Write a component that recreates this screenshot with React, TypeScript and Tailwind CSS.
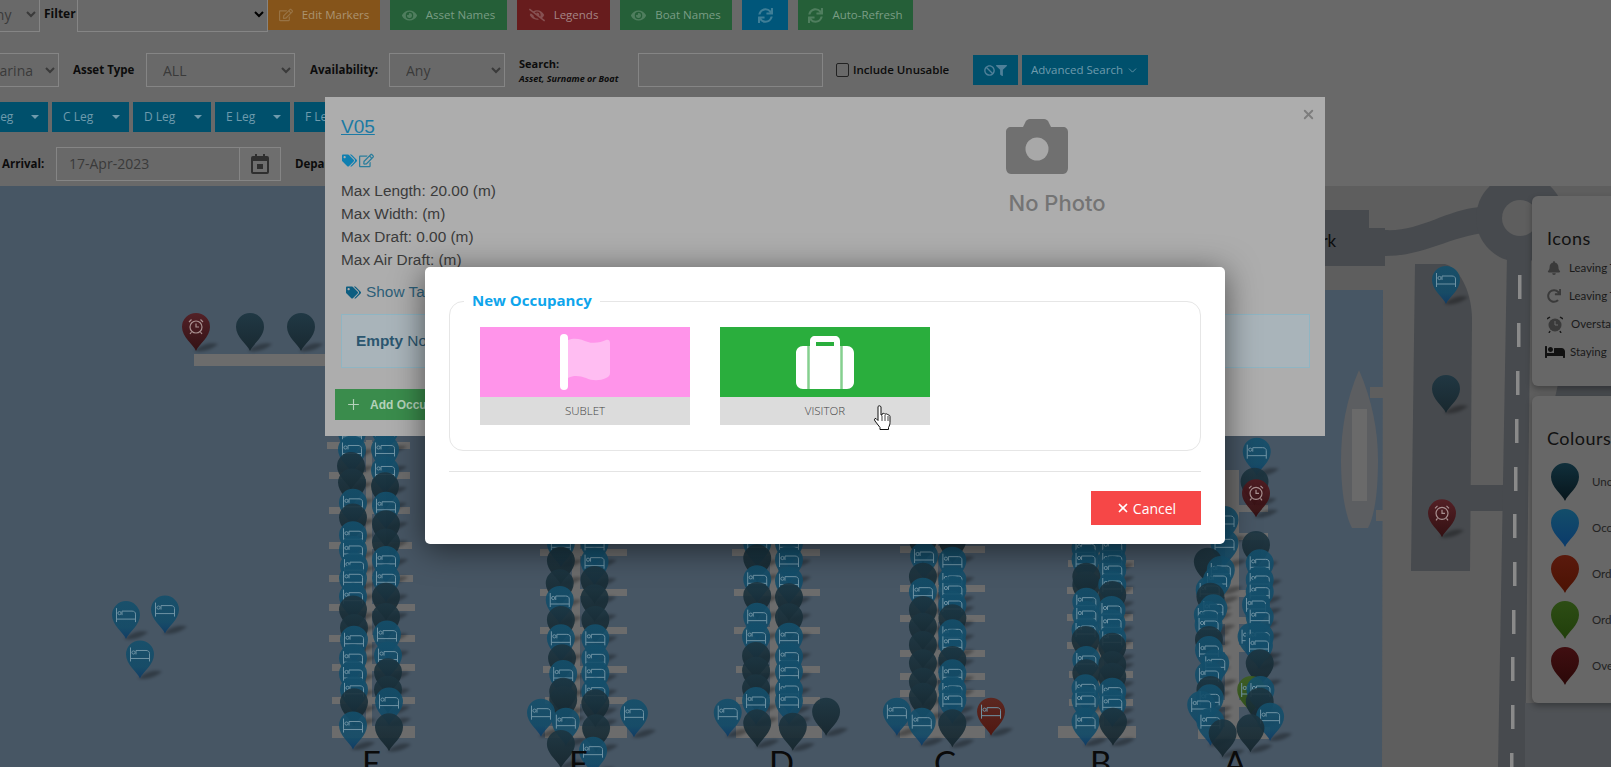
import React from 'react'
import { ChevronDown, Plus, X } from 'lucide-react'
import { FaBan, FaBed, FaBell, FaEye, FaEyeSlash, FaFilter, FaRedo, FaRegEdit, FaSync, FaTags } from 'react-icons/fa'

type Kind = 'b' | 'd' | 'r' | 'a' | 'g'
type Pin = [number, number, Kind]

// head positions were read off zoomed crops, so each group carries its own scale
const group = (ox: number, fx: number, oy: number, fy: number, list: Pin[]): Pin[] =>
  list.map(([x, y, k]) => [ox + x / fx, oy + y / fy + 24, k] as Pin)

const pins: Pin[] = [
  [196, 351, 'a'], [250, 351, 'd'], [301, 351, 'd'],
  ...group(0, 3, 190, 2.717, [
    [378, 1155, 'b'], [495, 1140, 'b'], [420, 1262, 'b'],
    [1056, 660, 'b'], [1056, 705, 'b'], [1053, 750, 'd'], [1056, 795, 'd'], [1059, 850, 'b'], [1059, 890, 'd'],
    [1059, 938, 'b'], [1059, 978, 'b'], [1062, 1022, 'b'], [1059, 1055, 'b'], [1059, 1105, 'b'], [1059, 1140, 'd'],
    [1062, 1190, 'd'], [1062, 1222, 'b'], [1059, 1272, 'b'], [1059, 1315, 'b'], [1062, 1358, 'b'], [1062, 1392, 'd'],
    [1059, 1455, 'b'],
    [1155, 650, 'b'], [1155, 705, 'b'], [1155, 762, 'b'], [1155, 805, 'd'], [1158, 858, 'b'], [1158, 908, 'd'],
    [1158, 958, 'd'], [1158, 1005, 'b'], [1158, 1055, 'b'], [1158, 1105, 'd'], [1158, 1160, 'd'], [1161, 1208, 'b'],
    [1164, 1265, 'b'], [1164, 1310, 'd'], [1164, 1358, 'd'], [1167, 1390, 'b'], [1167, 1460, 'd'],
  ]),
  ...group(430, 2.613, 530, 3, [
    [342, 40, 'b'], [342, 92, 'd'], [339, 160, 'd'], [339, 210, 'b'], [342, 270, 'd'], [342, 325, 'b'], [345, 385, 'd'],
    [348, 432, 'b'], [348, 485, 'd'], [348, 510, 'd'], [290, 548, 'b'], [355, 575, 'b'], [342, 642, 'd'],
    [430, 40, 'b'], [430, 95, 'b'], [430, 150, 'd'], [430, 205, 'd'], [432, 270, 'd'], [432, 325, 'b'], [432, 385, 'b'],
    [432, 430, 'b'], [432, 485, 'b'], [432, 520, 'd'], [533, 550, 'b'], [434, 595, 'd'], [426, 662, 'b'],
    [855, 40, 'b'], [855, 85, 'd'], [855, 148, 'b'], [855, 198, 'd'], [855, 260, 'b'], [852, 320, 'b'], [852, 378, 'd'],
    [852, 422, 'd'], [852, 475, 'd'], [852, 513, 'b'], [778, 548, 'b'], [855, 580, 'd'],
    [938, 40, 'b'], [938, 90, 'b'], [938, 152, 'b'], [938, 202, 'd'], [938, 262, 'd'], [938, 320, 'b'], [938, 380, 'b'],
    [938, 425, 'b'], [938, 480, 'b'], [938, 513, 'b'], [1035, 545, 'd'], [948, 590, 'd'],
    [1288, 30, 'd'], [1291, 78, 'b'], [1288, 140, 'd'], [1288, 185, 'b'], [1288, 240, 'd'], [1288, 290, 'd'],
    [1288, 345, 'd'], [1288, 400, 'd'], [1288, 455, 'd'], [1288, 500, 'd'], [1220, 545, 'b'], [1285, 575, 'b'],
    [1365, 30, 'd'], [1365, 92, 'b'], [1365, 150, 'b'], [1365, 180, 'b'], [1365, 225, 'b'], [1365, 265, 'd'],
    [1365, 310, 'b'], [1365, 340, 'b'], [1365, 390, 'd'], [1365, 430, 'b'], [1365, 480, 'b'], [1365, 510, 'b'],
    [1365, 580, 'd'], [1466, 545, 'r'],
  ]),
  ...group(1030, 2.699, 420, 3, [
    [150, 385, 'b'], [150, 420, 'b'], [152, 470, 'd'], [152, 495, 'd'], [152, 545, 'b'], [152, 585, 'b'], [150, 630, 'b'],
    [150, 660, 'd'], [152, 720, 'b'], [152, 760, 'd'], [150, 805, 'b'], [150, 840, 'b'], [150, 905, 'b'],
    [222, 380, 'b'], [222, 420, 'b'], [222, 450, 'b'], [222, 495, 'b'], [222, 525, 'd'], [220, 570, 'b'], [220, 610, 'b'],
    [222, 655, 'b'], [222, 680, 'd'], [222, 735, 'd'], [222, 770, 'd'], [222, 815, 'b'], [222, 850, 'b'], [224, 905, 'd'],
    [525, 300, 'b'], [525, 370, 'b'], [480, 425, 'd'], [515, 450, 'b'], [505, 480, 'b'], [485, 510, 'b'], [487, 530, 'd'],
    [495, 565, 'b'], [480, 585, 'b'], [482, 615, 'b'], [483, 660, 'd'], [483, 690, 'b'], [500, 730, 'b'], [483, 765, 'b'],
    [487, 810, 'd'], [485, 835, 'b'], [462, 855, 'b'], [487, 905, 'b'], [520, 940, 'd'],
    [612, 95, 'b'], [606, 185, 'd'], [610, 220, 'a'], [610, 375, 'd'], [620, 430, 'b'], [620, 480, 'b'], [620, 515, 'b'],
    [610, 555, 'b'], [620, 590, 'b'], [598, 650, 'b'], [620, 650, 'b'], [618, 675, 'b'], [620, 730, 'd'], [597, 810, 'g'],
    [622, 810, 'b'], [620, 845, 'd'], [648, 890, 'b'], [595, 925, 'd'], [1112, 280, 'a'],
  ]),
  [1446, 304, 'b'], [1446, 413, 'd'],
].sort((a, b) => a[1] - b[1]) as Pin[]

// [x, y, width, height] of the jetties
const bars: number[][] = [
  [194, 354, 140, 12],
  [327, 442, 83, 7], [329, 472, 81, 7], [329, 507, 81, 7], [329, 542, 83, 7], [329, 575, 84, 7], [329, 604, 86, 7],
  [329, 635, 86, 7], [332, 664, 83, 7], [332, 697, 83, 7], [332, 726, 83, 12], [366, 440, 6, 290],
  [540, 549, 87, 7], [540, 589, 87, 7], [540, 627, 87, 7], [543, 666, 84, 7], [545, 697, 82, 7], [545, 726, 82, 12], [572, 540, 8, 190],
  [732, 549, 88, 7], [734, 589, 86, 7], [734, 627, 86, 7], [736, 666, 84, 7], [736, 697, 84, 7], [736, 726, 86, 12], [770, 540, 8, 190],
  [900, 546, 85, 7], [900, 585, 85, 7], [900, 615, 85, 7], [900, 650, 85, 7], [900, 673, 85, 7], [900, 690, 85, 7], [900, 726, 85, 12], [930, 540, 8, 190],
  [1068, 560, 66, 7], [1067, 587, 66, 7], [1067, 614, 66, 7], [1067, 642, 66, 7], [1069, 671, 64, 7], [1069, 699, 64, 7], [1058, 726, 78, 12], [1092, 545, 12, 185],
  [1198, 505, 70, 7], [1198, 533, 70, 7], [1198, 590, 70, 7], [1198, 617, 70, 7], [1198, 645, 70, 7], [1198, 700, 70, 7], [1198, 727, 72, 12], [1225, 470, 14, 265],
]

const dashes = [[1518, 275], [1517, 323], [1516, 371], [1515, 419], [1514, 467], [1513, 514], [1513, 562], [1512, 610], [1511, 657], [1511, 705], [1510, 753]]

const Bed = () => (
  <g fill="none" stroke="#6f92a3" strokeWidth="1">
    <path d="M-9.500 -31V-17M-9.500 -20H9.500M9.500 -25V-17M-4 -24V-28H6C8 -28 9.500 -27 9.500 -25" />
    <circle cx="-6.500" cy="-26" r="1.600" />
  </g>
)

const Alarm = () => (
  <g fill="none" stroke="#a89090" strokeWidth="1.200">
    <circle cx="0" cy="-24" r="6" />
    <path d="M0 -27.500V-24H3M-7 -29L-4.500 -31.500M7 -29L4.500 -31.500M-4.500 -19L-6 -17M4.500 -19L6 -17" />
  </g>
)

const PIN_PATH = 'M0 0C-3 -7 -14 -14 -14 -24A14 14 0 1 1 14 -24C14 -14 3 -7 0 0Z'

const MapPin = ({ x, y, kind }: { x: number; y: number; kind: Kind }) => {
  const fill = { b: 'url(#pinBlue)', d: 'url(#pinDark)', r: 'url(#pinRed)', a: 'url(#pinMaroon)', g: 'url(#pinGreen)' }[kind]
  return (
    <g transform={`translate(${x} ${y})`}>
      <path d="M-2 0C6 -7 14 -9 22 -7C18 -3 8 2 -2 0Z" fill="#000" opacity="0.3" filter="url(#soft)" />
      <path d={PIN_PATH} fill={fill} fillOpacity={0.9} />
      {(kind === 'b' || kind === 'g' || kind === 'r') && <Bed />}
      {kind === 'a' && <Alarm />}
    </g>
  )
}

const MarinaMap = () => (
  <svg className="block h-[581px] w-[1611px]" viewBox="0 186 1611 581">
    <defs>
      <linearGradient id="pinBlue" x1="0" y1="0" x2="0" y2="1">
        <stop offset="0" stopColor="#144f6b" />
        <stop offset="0.7" stopColor="#124b68" />
        <stop offset="1" stopColor="#0c3a66" />
      </linearGradient>
      <linearGradient id="pinDark" x1="0" y1="0" x2="0" y2="1">
        <stop offset="0" stopColor="#1c3541" />
        <stop offset="1" stopColor="#14242b" />
      </linearGradient>
      <linearGradient id="pinRed" x1="0" y1="0" x2="0" y2="1">
        <stop offset="0" stopColor="#5e2219" />
        <stop offset="1" stopColor="#511108" />
      </linearGradient>
      <linearGradient id="pinMaroon" x1="0" y1="0" x2="0" y2="1">
        <stop offset="0" stopColor="#541b20" />
        <stop offset="1" stopColor="#310a0c" />
      </linearGradient>
      <linearGradient id="pinGreen" x1="0" y1="0" x2="0" y2="1">
        <stop offset="0" stopColor="#3d5e1f" />
        <stop offset="1" stopColor="#274a0f" />
      </linearGradient>
      <linearGradient id="legendDark" x1="0" y1="0" x2="0" y2="1">
        <stop offset="0" stopColor="#102f3b" />
        <stop offset="1" stopColor="#07151b" />
      </linearGradient>
      <linearGradient id="legendBlue" x1="0" y1="0" x2="0" y2="1">
        <stop offset="0" stopColor="#134d6a" />
        <stop offset="1" stopColor="#0b3a6a" />
      </linearGradient>
      <linearGradient id="legendRed" x1="0" y1="0" x2="0" y2="1">
        <stop offset="0" stopColor="#5a1a0d" />
        <stop offset="1" stopColor="#4b1203" />
      </linearGradient>
      <linearGradient id="legendGreen" x1="0" y1="0" x2="0" y2="1">
        <stop offset="0" stopColor="#2d4d15" />
        <stop offset="1" stopColor="#213f0b" />
      </linearGradient>
      <linearGradient id="legendMaroon" x1="0" y1="0" x2="0" y2="1">
        <stop offset="0" stopColor="#400f11" />
        <stop offset="1" stopColor="#2b0808" />
      </linearGradient>
      <filter id="soft" x="-30%" y="-60%" width="160%" height="220%">
        <feGaussianBlur stdDeviation="1.500" />
      </filter>
    </defs>

    <rect x="0" y="186" width="1611" height="581" fill="#475664" />
    <path d="M1320 186H1611V767H1382L1383 290H1320Z" fill="#5e5e5e" />

    <path d="M1300 210H1369V228H1385V266H1300Z" fill="#474a4e" />
    <path d="M1385 230C1420 232 1445 210 1480 207L1490 232C1450 236 1425 256 1385 256Z" fill="#474a4e" />
    <circle cx="1520" cy="218" r="44" fill="#474a4e" />
    <circle cx="1520" cy="218" r="18" fill="#5e5e5e" />
    <path d="M1415 264H1445C1462 270 1472 295 1472 320L1470 571H1411Z" fill="#474a4e" />
    <path d="M1470 485H1505V511H1470Z" fill="#474a4e" />
    <path d="M1507 255H1531L1525 767H1498Z" fill="#474a4e" />
    <path d="M1525 703H1611V767H1525Z" fill="#4f5256" />
    <path d="M1558 384H1611V398H1555Z" fill="#474a4e" />
    {dashes.map(([x, y]) => (
      <rect key={y} x={x} y={y} width="3.500" height="24" fill="#8a8a8a" />
    ))}

    <path d="M1359 370C1346 400 1341 430 1341 460C1341 490 1345 515 1352 528H1368C1375 515 1378 490 1378 460C1378 430 1372 400 1359 370Z" fill="#5c5e61" />
    <rect x="1352" y="409" width="15" height="92" fill="#6a6a6a" />
    <rect x="1370" y="387" width="13" height="11" fill="#5e5e5e" />
    <rect x="1376" y="510" width="8" height="11" fill="#5e5e5e" />

    {bars.map(([x, y, w, h]) => (
      <rect key={`${x}-${y}`} x={x} y={y} width={w} height={h} fill="#6c6c6c" />
    ))}

    <text x="1303" y="247" fontFamily="Lato, sans-serif" fontSize="17" fill="#0c0c0c">Park</text>

    {pins.map(([x, y, kind], i) => (
      <MapPin key={i} x={x} y={y} kind={kind} />
    ))}

    <g fontFamily="Lato, sans-serif" fontSize="33" fill="#0a0a0a">
      <text x="362" y="775">E</text>
      <text x="569" y="775">F</text>
      <text x="769" y="775">D</text>
      <text x="934" y="775">C</text>
      <text x="1090" y="775">B</text>
      <text x="1224" y="775">A</text>
    </g>
  </svg>
)

const Field = ({ value, className }: { value: string; className: string }) => (
  <select defaultValue={value} className={`h-[34px] rounded-none border border-[#858585] bg-transparent pl-[12px] text-[14px] text-[#3a3a3a] ${className}`}>
    <option value={value}>{value}</option>
  </select>
)

const ToolButton = ({ icon, label, className }: { icon: React.ReactNode; label: string; className: string }) => (
  <button className={`flex h-[30px] items-center justify-center gap-[9px] text-[11.5px] ${className}`}>
    <span className="opacity-50">{icon}</span>
    {label}
  </button>
)

const LegButton = ({ label, className }: { label: string; className: string }) => (
  <button className={`flex h-[30px] shrink-0 items-center justify-between bg-[#00506c] pl-[11px] pr-[9px] text-[12px] text-[#6f9bad] ${className}`}>
    {label}
    <span className="h-0 w-0 border-x-[4px] border-t-[4px] border-x-transparent border-t-[#6f9bad]" />
  </button>
)

const Toolbar = () => (
  <div className="flex h-[186px] flex-col bg-[#696969]">
    <div className="flex h-[32px] items-start">
      <select className="-ml-[90px] -mt-[4px] h-[36px] w-[130px] shrink-0 rounded-none border border-[#858585] bg-transparent pl-[72px] text-[14px] text-[#3a3a3a]">
        <option>Any</option>
      </select>
      <span className="ml-[4px] mt-[5px] w-[33px] shrink-0 text-[12px] font-bold text-[#0c0c0c]">Filter</span>
      <select className="-mt-[4px] h-[36px] w-[191px] shrink-0 rounded-none border border-[#858585] bg-transparent" />
      <div className="flex gap-[10px]">
        <ToolButton icon={<FaRegEdit size={14} />} label="Edit Markers" className="w-[112px] bg-[#85541a] text-[#ab9370]" />
        <ToolButton icon={<FaEye size={15} />} label="Asset Names" className="w-[117px] bg-[#255f38] text-[#7a9d85]" />
        <ToolButton icon={<FaEyeSlash size={16} />} label="Legends" className="w-[93px] bg-[#671c1d] text-[#a58585]" />
        <ToolButton icon={<FaEye size={15} />} label="Boat Names" className="w-[112px] bg-[#255f38] text-[#7a9d85]" />
        <ToolButton icon={<FaSync size={15} />} label="" className="w-[46px] bg-[#00567a] text-[#7ea6b5]" />
        <ToolButton icon={<FaSync size={15} />} label="Auto-Refresh" className="w-[115px] bg-[#255f38] text-[#7a9d85]" />
      </div>
    </div>

    <div className="mt-[21px] flex h-[34px] items-center">
      <select className="-ml-[60px] h-[34px] w-[119px] shrink-0 rounded-none border border-[#858585] bg-transparent pl-[42px] text-[14px] text-[#3a3a3a]">
        <option>Marina</option>
      </select>
      <span className="ml-[14px] w-[73px] shrink-0 text-[11.5px] font-bold text-[#0c0c0c]">Asset Type</span>
      <Field value="ALL" className="w-[149px] shrink-0" />
      <span className="ml-[15px] w-[79px] shrink-0 text-[11.5px] font-bold text-[#0c0c0c]">Availability:</span>
      <Field value="Any" className="w-[116px] shrink-0" />
      <div className="ml-[14px] w-[119px] shrink-0 text-[#0c0c0c]">
        <div className="text-[11px] leading-[16px] font-bold">Search:</div>
        <div className="text-[9px] leading-[13px] font-bold italic">Asset, Surname or Boat</div>
      </div>
      <div className="h-[34px] w-[185px] shrink-0 border border-[#858585]" />
      <span className="ml-[13px] h-[14px] w-[13px] shrink-0 rounded-[2px] border border-[#222]" />
      <span className="ml-[4px] w-[120px] shrink-0 text-[11.5px] font-semibold text-[#0c0c0c]">Include Unusable</span>
      <button className="flex h-[30px] w-[45px] shrink-0 items-center justify-center gap-[1px] bg-[#00506c] text-[#4f8099]">
        <FaBan size={11} />
        <FaFilter size={11} />
      </button>
      <button className="ml-[4px] flex h-[30px] w-[126px] shrink-0 items-center justify-center gap-[3px] bg-[#00506c] text-[11.5px] text-[#6f9bad]">
        Advanced Search
        <ChevronDown size={13} strokeWidth={1.5} />
      </button>
    </div>

    <div className="mt-[15px] flex h-[30px] gap-[4px] overflow-hidden">
      <LegButton label="B Leg" className="-ml-[28px] w-[76px]" />
      <LegButton label="C Leg" className="w-[77px]" />
      <LegButton label="D Leg" className="w-[78px]" />
      <LegButton label="E Leg" className="w-[75px]" />
      <LegButton label="F Leg" className="w-[78px]" />
    </div>

    <div className="mt-[15px] flex h-[34px] items-center">
      <span className="ml-[2px] w-[54px] shrink-0 text-[11.5px] font-bold text-[#0c0c0c]">Arrival:</span>
      <div className="flex h-[34px] w-[225px] shrink-0 border border-[#858585]">
        <span className="flex-1 pl-[12px] text-[14px] leading-[32px] text-[#3a3a3a]">17-Apr-2023</span>
        <span className="flex w-[41px] items-center justify-center border-l border-[#858585] bg-[#6e6e6e]">
          <svg width="18" height="20" viewBox="0 0 18 20">
            <path d="M4 0h2v2h6V0h2v2h2a2 2 0 0 1 2 2v14a2 2 0 0 1-2 2H2a2 2 0 0 1-2-2V4a2 2 0 0 1 2-2h2zM2 7v11h14V7zm4 3h6v5H6z" fill="#2f2f2f" fillRule="evenodd" />
          </svg>
        </span>
      </div>
      <span className="ml-[14px] text-[11.5px] font-bold text-[#0c0c0c]">Departure:</span>
    </div>
  </div>
)

const AssetPanel = () => (
  <div className="absolute left-[325px] top-[97px] flex h-[339px] w-[1000px] bg-[#adadad] font-['Liberation_Sans',sans-serif]">
    <div className="w-[500px] pl-[16px] pt-[19px]">
      <a className="block text-[19px] leading-[21px] text-[#1b7aa4] underline">V05</a>
      <div className="mt-[15px] flex h-[17px] items-center gap-[2px] pl-[1px]">
        <FaTags size={15} className="text-[#0f7fb0]" />
        <FaRegEdit size={15} className="text-[#2a7d9c]" />
      </div>
      <div className="mt-[10px] text-[15.4px] leading-[23px] text-[#3b3b3b]">
        <div>Max Length: 20.00 (m)</div>
        <div>Max Width: (m)</div>
        <div>Max Draft: 0.00 (m)</div>
        <div>Max Air Draft: (m)</div>
      </div>
      <div className="mt-[10px] flex items-center gap-[5px] pl-[5px] text-[15.4px] leading-[22px] text-[#2d5f78]">
        <FaTags size={15} className="text-[#0c5d80]" />
        Show Tags
      </div>
      <div className="mt-[11px] flex h-[54px] w-[969px] items-center border border-[#8fb5c3] bg-[#a9b4ba] pl-[14px] text-[15.4px] text-[#2b566f]">
        <b>Empty</b>&nbsp;Not Occupied
      </div>
      <button className="-ml-[6px] mt-[21px] flex h-[31px] w-[150px] items-center gap-[8px] bg-[#3a8c4c] pl-[10px] text-[12px] font-bold text-[#b4d2ba]">
        <Plus size={17} strokeWidth={1.6} />
        Add Occupancy
      </button>
    </div>
    <div className="flex flex-1 flex-col items-center pr-[36px] pt-[22px]">
      <svg width="62" height="55" viewBox="0 0 62 55" className="-ml-[40px]">
        <path d="M5 8h12l2-4c1-3 3-4 5-4h14c2 0 4 1 5 4l2 4h12c3 0 5 2 5 5v36c0 3-2 6-5 6H5c-3 0-5-3-5-6V13c0-3 2-5 5-5z" fill="#707070" />
        <circle cx="31" cy="30" r="11.500" fill="#a8a8a8" />
      </svg>
      <span className="mt-[16px] font-['Inter',sans-serif] text-[22px] leading-[26px] font-medium text-[#747474]">No Photo</span>
    </div>
    <X size={15} strokeWidth={3} className="absolute right-[9px] top-[10px] text-[#7d7d7d]" />
  </div>
)

const Tile = ({ label, className, children }: { label: string; className: string; children: React.ReactNode }) => (
  <div className="w-[210px]">
    <div className={`flex h-[70px] items-center justify-center ${className}`}>{children}</div>
    <div className="h-[28px] bg-[#dcdcdc] text-center text-[11.5px] leading-[28px] font-light text-[#444]">{label}</div>
  </div>
)

const OccupancyModal = () => (
  <div className="absolute left-[425px] top-[267px] h-[277px] w-[800px] rounded-[5px] bg-white px-[24px] pt-[34px] shadow-[0_5px_32px_rgba(0,0,0,0.55)]">
    <div className="relative h-[150px] w-[752px] rounded-[14px] border border-[#e6e6e6] pl-[30px] pt-[25px]">
      <span className="absolute -top-[11px] left-[14px] bg-white px-[8px] text-[15px] leading-[18px] font-bold text-[#0ea5ec]">New Occupancy</span>
      <div className="flex gap-[30px]">
        <Tile label="SUBLET" className="bg-[#ff94ea]">
          <svg width="50" height="58" viewBox="0 0 50 58">
            <rect x="0" y="1" width="8" height="56" rx="4" fill="#fff" />
            <path d="M8 7c8-3 14 0 20 2 6 2 14 0 18-2 2-1 4 0 4 3v30c0 3-2 4-4 5-6 3-14 3-20 0-6-2-12-3-18 0z" fill="#ffbdf2" />
          </svg>
        </Tile>
        <Tile label="VISITOR" className="bg-[#2aae3d]">
          <svg width="58" height="53" viewBox="0 0 58 53">
            <path d="M14 10V5c0-3 2-5 5-5h20c3 0 5 2 5 5v5h7c4 0 7 3 7 7v29c0 4-3 7-7 7H7c-4 0-7-3-7-7V17c0-4 3-7 7-7zm6-4v4h18V6z" fill="#fff" fillRule="evenodd" />
            <path d="M12.500 10v43M45.500 10v43" stroke="#85d08f" strokeWidth="2.500" />
          </svg>
        </Tile>
      </div>
    </div>
    <div className="mt-[20px] h-px w-[752px] bg-[#e4e4e4]" />
    <div className="mt-[19px] flex w-[752px] justify-end">
      <button className="flex h-[34px] w-[110px] items-center justify-center gap-[3px] bg-[#f64747] text-[14px] text-white">
        <X size={14} strokeWidth={3} />
        Cancel
      </button>
    </div>
  </div>
)

const HandCursor = () => (
  <svg className="absolute left-[873px] top-[405px]" width="18" height="26" viewBox="0 0 18 26">
    <path d="M5 1.500c1-1 2.500-1 3 .5v8l1 .2V9c1-1 2.500-.8 3 .3 1-.8 2.500-.5 3 .7 1-.3 2 .5 2 1.500v6c0 2-.5 3-1.500 5v2H7v-2L2 16c-1-1.500-.5-3 1-2.500l2 2z" fill="#fff" stroke="#111" strokeWidth="1" strokeLinejoin="round" />
    <path d="M9 11v5M12 10v6M15 11v5" stroke="#111" strokeWidth="0.800" />
  </svg>
)

const LegendPin = ({ fill }: { fill: string }) => (
  <svg width="30" height="40" viewBox="-15 -39 30 40" className="shrink-0">
    <path d={PIN_PATH} fill={fill} />
  </svg>
)

const colourRows = [
  { fill: 'url(#legendDark)', label: 'Unoccupied' },
  { fill: 'url(#legendBlue)', label: 'Occupied' },
  { fill: 'url(#legendRed)', label: 'Order Pending' },
  { fill: 'url(#legendGreen)', label: 'Order Complete' },
  { fill: 'url(#legendMaroon)', label: 'Overstaying' },
]

const Legend = () => (
  <div className="absolute left-[1532px] top-[196px] flex w-[120px] flex-col gap-[10px] font-['Lato',sans-serif] text-[#111]">
    <div className="h-[190px] rounded-[6px] bg-[#676767] pl-[15px] pt-[31px] shadow-[0_3px_6px_rgba(0,0,0,0.3)]">
      <div className="text-[18px] leading-[22px] tracking-[0.5px]">Icons</div>
      <div className="mt-[5px] flex flex-col text-[11.5px] leading-[28px] whitespace-nowrap text-[#1a1a1a]">
        <div className="flex items-center gap-[8px]"><FaBell size={14} className="shrink-0 text-[#3a3a3a]" />Leaving Today</div>
        <div className="flex items-center gap-[8px]"><FaRedo size={14} className="shrink-0 text-[#3a3a3a]" />Leaving Tomorrow</div>
        <div className="flex items-center gap-[8px]">
          <svg width="16" height="17" viewBox="0 0 16 17" className="shrink-0">
            <circle cx="8" cy="9" r="6.500" fill="#3a3a3a" />
            <path d="M0 3l3-2M16 3l-3-2M3 15l-1 2M13 15l1 2" stroke="#1a1a1a" strokeWidth="1.500" />
            <path d="M8 5v4h3" stroke="#6a6a6a" fill="none" />
          </svg>
          Overstaying
        </div>
        <div className="-ml-[2px] flex items-center gap-[5px]"><FaBed size={20} className="shrink-0 text-[#111]" />Staying</div>
      </div>
    </div>
    <div className="h-[307px] rounded-[6px] bg-[#676767] pl-[15px] pt-[31px] shadow-[0_3px_6px_rgba(0,0,0,0.3)]">
      <div className="text-[18px] leading-[22px] tracking-[0.5px]">Colours</div>
      <div className="mt-[13px] flex flex-col gap-[6px] text-[11.5px] whitespace-nowrap text-[#222]">
        {colourRows.map(row => (
          <div key={row.label} className="flex h-[40px] items-center gap-[12px] pl-[3px]">
            <LegendPin fill={row.fill} />
            {row.label}
          </div>
        ))}
      </div>
    </div>
  </div>
)

export default function App() {
  return (
    <div className="relative h-[767px] w-[1611px] overflow-hidden font-['Open_Sans',sans-serif]">
      <Toolbar />
      <MarinaMap />
      <Legend />
      <AssetPanel />
      <OccupancyModal />
      <HandCursor />
    </div>
  )
}
